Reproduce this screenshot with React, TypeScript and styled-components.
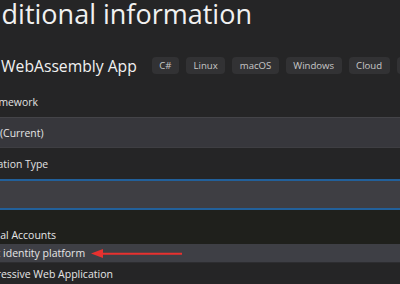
import React from "react";
import styled, { createGlobalStyle } from "styled-components";

const GlobalStyle = createGlobalStyle`
  html, body {
    margin: 0;
    padding: 0;
    background: #252526;
    overflow: hidden;
  }
  body {
    font-family: "Open Sans", "Noto Sans", "Liberation Sans", sans-serif;
    color: #e4e4e4;
  }
`;

const Page = styled.div`
  position: relative;
  width: 400px;
  height: 284px;
  overflow: hidden;
  background: #252526;
`;

const Column = styled.div`
  display: flex;
  flex-direction: column;
  width: 900px;
`;

const Heading = styled.h1<{ $indent: number }>`
  margin: 0 0 0 ${(p) => p.$indent}px;
  height: 40px;
  font-size: 27px;
  font-weight: 400;
  line-height: 27px;
  color: #f1f1f1;
  white-space: nowrap;
`;

const ProjectRow = styled.div<{ $indent: number }>`
  display: flex;
  align-items: center;
  height: 17px;
  margin: 17px 0 0 ${(p) => p.$indent}px;
`;

const ProjectName = styled.span`
  font-size: 15.7px;
  color: #f1f1f1;
  white-space: nowrap;
  margin-right: 15px;
`;

const Tags = styled.div`
  display: flex;
  gap: 7px;
`;

const Tag = styled.span`
  display: inline-flex;
  align-items: center;
  height: 17px;
  padding: 0 7.5px;
  border-radius: 4px;
  background: #323234;
  color: #c8c8c8;
  font-size: 9.6px;
  white-space: nowrap;
`;

const Label = styled.div<{ $indent: number; $top: number }>`
  height: 20px;
  line-height: 20px;
  margin: ${(p) => p.$top}px 0 0 ${(p) => p.$indent}px;
  font-size: 10.4px;
  color: #e2e2e2;
  white-space: nowrap;
`;

const Select = styled.div`
  height: 29px;
  margin-top: 5px;
  display: flex;
  align-items: center;
  background: #37373c;
  border-top: 1px solid #444448;
  border-bottom: 1px solid #3e3e42;
  font-size: 10.4px;
  color: #e6e6e6;
  white-space: nowrap;
`;

const FocusedSelect = styled(Select)`
  height: 27px;
  background: #3e3e43;
  border-top: 2px solid #22609a;
  border-bottom: 2px solid #22609a;
`;

const Value = styled.span<{ $indent: number }>`
  margin-left: ${(p) => p.$indent}px;
`;

const Dropdown = styled.ul`
  list-style: none;
  margin: 0;
  padding: 0;
  background: #1f201c;
  border-bottom: 1px solid #2d2d30;
`;

const Option = styled.li<{ $active?: boolean }>`
  height: ${(p) => (p.$active ? 18 : 17)}px;
  line-height: ${(p) => (p.$active ? 18 : 17)}px;
  background: ${(p) => (p.$active ? "#3e3f45" : "transparent")};
  font-size: 10.5px;
  color: #e6e6e6;
  white-space: nowrap;
`;

const CheckRow = styled.label<{ $indent: number }>`
  display: flex;
  align-items: center;
  gap: 6px;
  height: 20px;
  margin: 1px 0 0 ${(p) => p.$indent}px;
  font-size: 10.5px;
  color: #e6e6e6;
  white-space: nowrap;
`;

const Box = styled.span`
  width: 12px;
  height: 12px;
  border: 1px solid #8a8a8a;
  box-sizing: border-box;
`;

const Arrow = styled.svg`
  position: absolute;
  left: 88px;
  top: 246px;
`;

export default function App() {
  return (
    <Page>
      <GlobalStyle />
      <Column>
        <Heading $indent={-32}>Additional information</Heading>
        <ProjectRow $indent={-49}>
          <ProjectName>Blazor WebAssembly App</ProjectName>
          <Tags>
            <Tag>C#</Tag>
            <Tag>Linux</Tag>
            <Tag>macOS</Tag>
            <Tag>Windows</Tag>
            <Tag>Cloud</Tag>
            <Tag>Web</Tag>
          </Tags>
        </ProjectRow>
        <Label $indent={-17} $top={18}>Framework</Label>
        <Select>
          <Value $indent={-42}>.NET 8.0 (Current)</Value>
        </Select>
        <Label $indent={-49} $top={6}>Authentication Type</Label>
        <FocusedSelect>
          <Value $indent={-42}>None</Value>
        </FocusedSelect>
        <Dropdown>
          <Option>
            <Value $indent={-42}>None</Value>
          </Option>
          <Option>
            <Value $indent={-39}>Individual Accounts</Value>
          </Option>
          <Option $active>
            <Value $indent={-46}>Microsoft identity platform</Value>
          </Option>
        </Dropdown>
        <CheckRow $indent={-44}>
          <Box />
          Progressive Web Application
        </CheckRow>
      </Column>
      <Arrow width="96" height="14" viewBox="0 0 96 14">
        <path d="M15 6.8 H94 V8.8 H15 Z" fill="#e8312f" />
        <path d="M3 7.5 L15 3 L15 12 Z" fill="#e8312f" />
      </Arrow>
    </Page>
  );
}
